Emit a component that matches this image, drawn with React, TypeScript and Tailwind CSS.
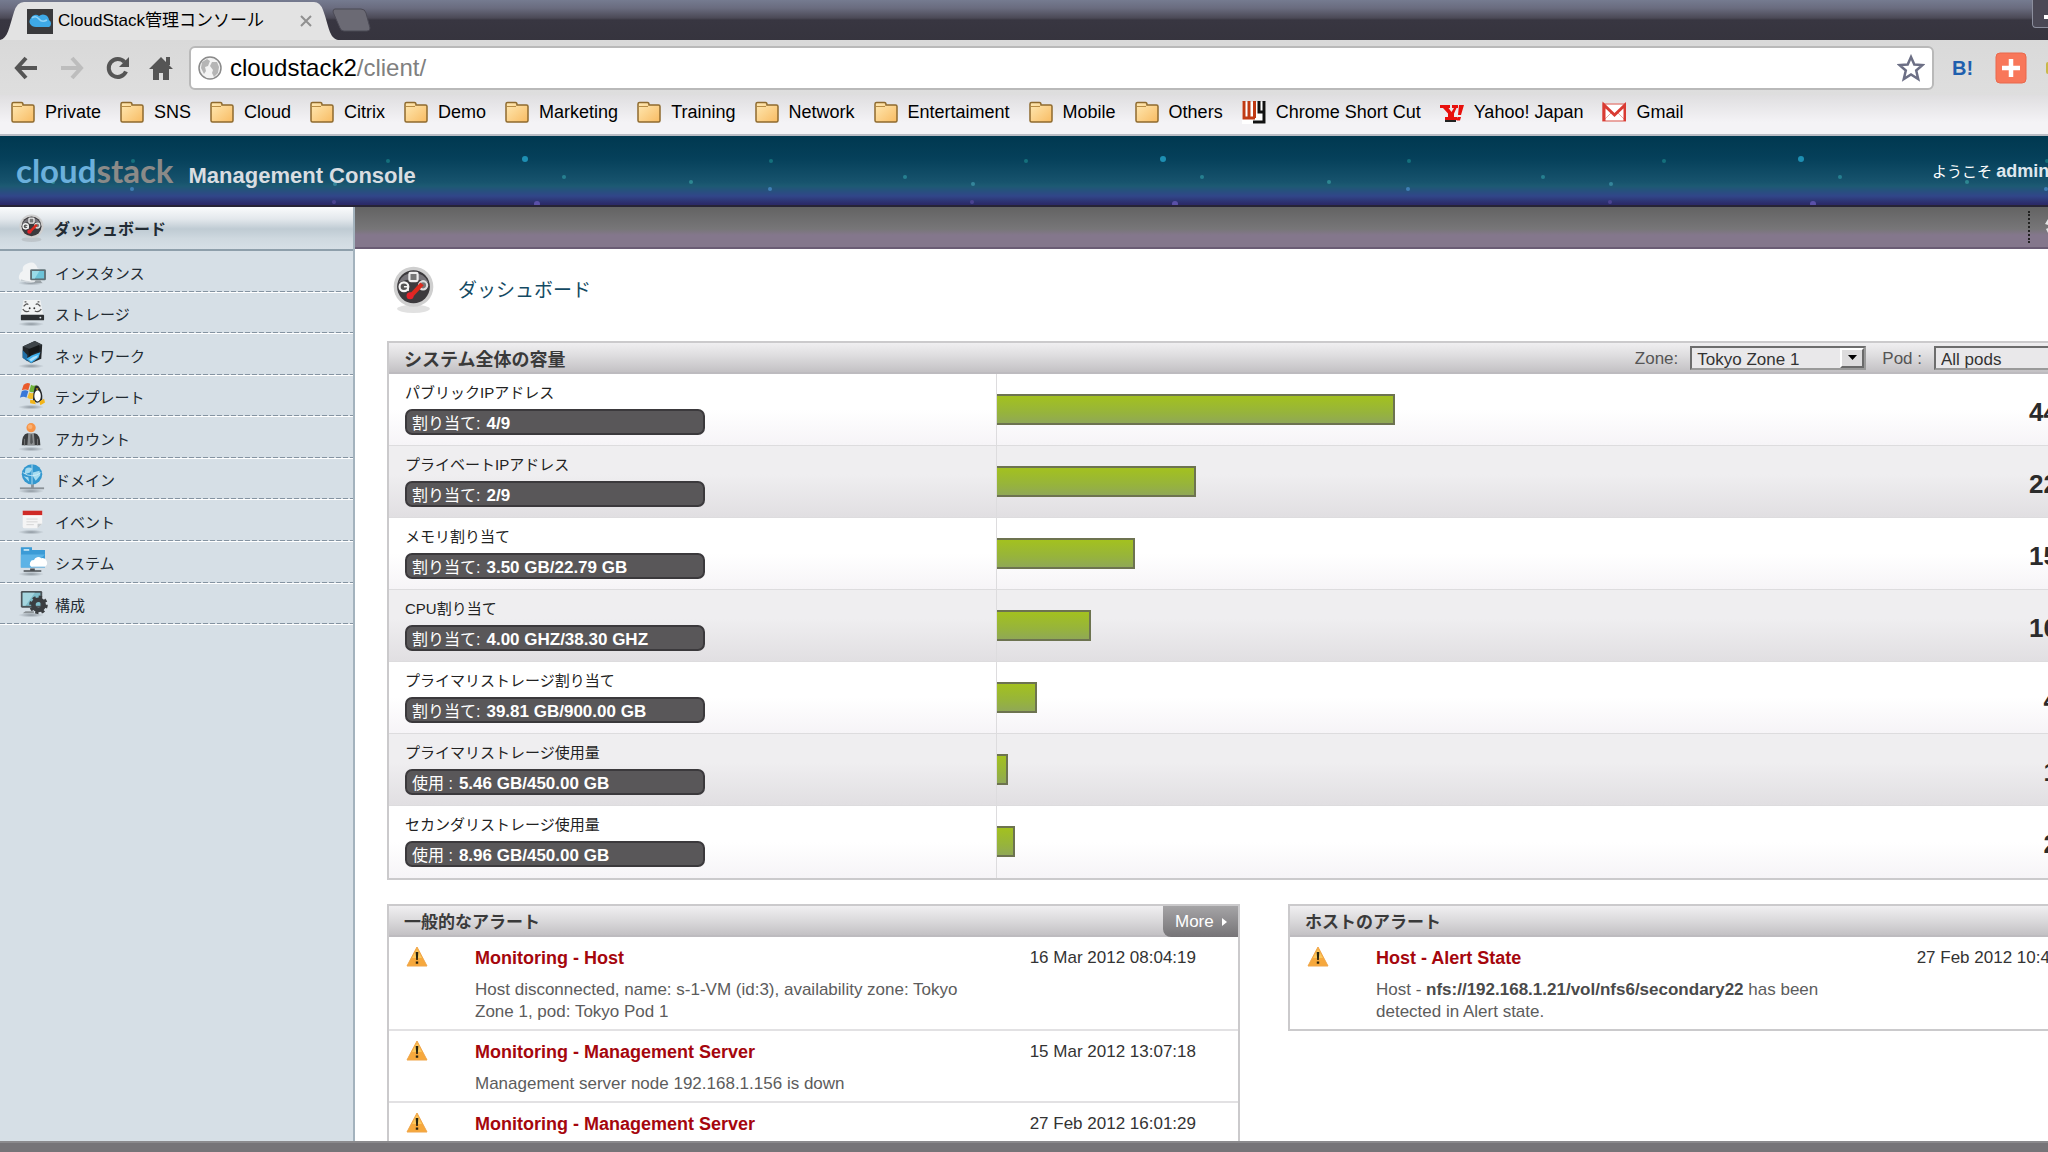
import type { ReactNode } from "react";

const UI = "font-['Liberation_Sans','Noto_Sans_CJK_JP',sans-serif]";

const NAV: { label: string; icon: ReactNode }[] = [
  { label: "インスタンス", icon: <InstanceIcon /> },
  { label: "ストレージ", icon: <StorageIcon /> },
  { label: "ネットワーク", icon: <NetworkIcon /> },
  { label: "テンプレート", icon: <TemplateIcon /> },
  { label: "アカウント", icon: <AccountIcon /> },
  { label: "ドメイン", icon: <DomainIcon /> },
  { label: "イベント", icon: <EventIcon /> },
  { label: "システム", icon: <SystemIcon /> },
  { label: "構成", icon: <ConfigIcon /> },
];

const FOLDERS = [
  "Private",
  "SNS",
  "Cloud",
  "Citrix",
  "Demo",
  "Marketing",
  "Training",
  "Network",
  "Entertaiment",
  "Mobile",
  "Others",
];

const CAPACITY = [
  { name: "パブリックIPアドレス", kind: "割り当て:", used: "4/9", percent: 44.44 },
  { name: "プライベートIPアドレス", kind: "割り当て:", used: "2/9", percent: 22.22 },
  { name: "メモリ割り当て", kind: "割り当て:", used: "3.50 GB/22.79 GB", percent: 15.36 },
  { name: "CPU割り当て", kind: "割り当て:", used: "4.00 GHZ/38.30 GHZ", percent: 10.44 },
  { name: "プライマリストレージ割り当て", kind: "割り当て:", used: "39.81 GB/900.00 GB", percent: 4.42 },
  { name: "プライマリストレージ使用量", kind: "使用 :", used: "5.46 GB/450.00 GB", percent: 1.21 },
  { name: "セカンダリストレージ使用量", kind: "使用 :", used: "8.96 GB/450.00 GB", percent: 1.99 },
];

const GENERAL_ALERTS = [
  {
    title: "Monitoring - Host",
    date: "16 Mar 2012 08:04:19",
    body: "Host disconnected, name: s-1-VM (id:3), availability zone: Tokyo Zone 1, pod: Tokyo Pod 1",
  },
  {
    title: "Monitoring - Management Server",
    date: "15 Mar 2012 13:07:18",
    body: "Management server node 192.168.1.156 is down",
  },
  {
    title: "Monitoring - Management Server",
    date: "27 Feb 2012 16:01:29",
    body: "Management server node 192.168.1.156 is down",
  },
];

/* ---------- sidebar icons ---------- */

function GaugeIcon({ className }: { className: string }) {
  return (
    <svg className={className} viewBox="0 0 30 34" preserveAspectRatio="none" aria-hidden="true">
      <ellipse cx="15" cy="31" rx="12" ry="3" fill="#888" opacity="0.25" />
      <circle cx="15" cy="15" r="14.500" fill="#cfcfcf" />
      <circle cx="15" cy="15" r="12" fill="#3c3a3d" />
      <path d="M4 12a12 12 0 0 1 22 0q-11-5-22 0z" fill="#77757a" />
      <rect x="12" y="5" width="6" height="6" rx="1" fill="#777" stroke="#eee" strokeWidth="1.600" />
      <circle cx="8" cy="15" r="3.200" fill="#555" stroke="#f4f4f4" strokeWidth="1.600" />
      <path d="M8 15h3v3" fill="none" stroke="#f4f4f4" strokeWidth="1.200" />
      <circle cx="22" cy="14" r="3" fill="#777" stroke="#ddd" strokeWidth="1.600" />
      <path d="M20 12l2.500 2-9 9.500-2.500-2z" fill="#dc2a1e" />
      <circle cx="12.500" cy="21.500" r="2.600" fill="#e4232b" />
    </svg>
  );
}

function NavSvg({ children }: { children: ReactNode }) {
  return (
    <svg className="h-[30px] w-[26px] shrink-0 overflow-visible" viewBox="0 0 28 32" aria-hidden="true">
      <defs>
        <radialGradient id="ground">
          <stop offset="0" stopColor="#6f7982" stopOpacity="0.7" />
          <stop offset="1" stopColor="#6f7982" stopOpacity="0" />
        </radialGradient>
      </defs>
      <ellipse cx="13" cy="29" rx="14" ry="2.500" fill="url(#ground)" />
      {children}
    </svg>
  );
}

function InstanceIcon() {
  return (
    <NavSvg>
      <path d="M3 27q-4-2-3-6t4-5q-1-6 5-8 8-4 11 5 5 1 5 7v6q-10 4-22 1z" fill="#f1f3f4" />
      <path d="M2 25q10 4 22 0-8 4-22 2z" fill="#c6ced3" />
      <rect x="12" y="14" width="17" height="12" rx="1.500" fill="#5f7076" />
      <rect x="14" y="16" width="13" height="8" fill="#6cc3d8" />
      <path d="M14 16h8l-5 8h-3z" fill="#9adbe8" />
      <path d="M18 26h5l2 3h-9z" fill="#9aa2a7" />
    </NavSvg>
  );
}

function StorageIcon() {
  return (
    <NavSvg>
      <path d="M5 3h18l3 16H2z" fill="#f1f3f4" />
      <path d="M5 10q3-4 5-2M23 10q-3-4-5-2M4 13q3 4 7 2M24 13q-3 4-7 2M6 5h2M20 5h2" fill="none" stroke="#555" strokeWidth="1.300" />
      <circle cx="11.500" cy="12" r="1" fill="#333" />
      <circle cx="16.500" cy="12" r="1" fill="#333" />
      <rect x="2" y="19" width="25" height="6" rx="1" fill="#2d3033" />
      <circle cx="23" cy="22" r="1" fill="#dfe6ea" />
    </NavSvg>
  );
}

function NetworkIcon() {
  return (
    <NavSvg>
      <path d="M4 8l13-6 8 4-1 15-11 5L4 20z" fill="#222629" />
      <path d="M4 8l13-6 8 4-12 5z" fill="#3e454a" />
      <path d="M4 12l5 5v7l-5-4z" fill="#1f6ea6" />
      <path d="M8 21q5-4 15-7l-2 6-8 6z" fill="#3fb0ee" />
      <path d="M11 22q4-4 10-5l-2 3-6 4z" fill="#a9defa" />
      <path d="M10 11l12-5v7q-6 1-11 6z" fill="#15181a" />
    </NavSvg>
  );
}

function TemplateIcon() {
  return (
    <NavSvg>
      <path d="M5 5q4-3 7-1l-2 7q-3-2-7 0z" fill="#ea5b2c" />
      <path d="M13 5q3 2 6 0l-2 7q-3 2-6 0z" fill="#6fb33a" />
      <path d="M3 12q4-2 7 0l-2 7q-3-2-7 0z" fill="#3a78d8" />
      <path d="M11 13q3 2 6 0l-2 7q-3 1-6-1z" fill="#f2bd2c" />
      <path d="M17 7q3-3 5 1 4 6 3 13-5 6-10 1 0-8 2-15z" fill="#25282a" />
      <ellipse cx="20" cy="17" rx="3.500" ry="6" fill="#fff" />
      <path d="M18 9h3l-1.500 2zM12 21l5 1 1 4-6-1zM22 23l5-3 1 4-5 3z" fill="#f2b418" />
    </NavSvg>
  );
}

function AccountIcon() {
  return (
    <NavSvg>
      <circle cx="13" cy="6" r="5" fill="#f79447" />
      <circle cx="12" cy="5" r="2.500" fill="#fbb173" />
      <path d="M3 25q0-12 6-13l4 1 4-1q6 1 6 13z" fill="#3b3d3f" />
      <path d="M10 12h6l1 13H9z" fill="#8d9092" />
      <path d="M12.500 13h1.500l1 9-2 2-1-2z" fill="#55585a" />
      <path d="M6 18v7M20 18v7" stroke="#77797b" />
    </NavSvg>
  );
}

function DomainIcon() {
  return (
    <NavSvg>
      <rect x="1" y="25" width="26" height="2" fill="#8a9298" />
      <rect x="13" y="21" width="3" height="5" fill="#8a9298" />
      <circle cx="14" cy="11" r="11" fill="#3498cf" />
      <path d="M7 5q4-3 7 0l-2 4-6 2zM15 9l7-2 1 5-5 6-3-5zM5 13l5 1 1 5z" fill="#a6dcf0" />
      <path d="M4 9q10 7 20 0M14 0v22" fill="none" stroke="#d8f2fb" strokeWidth="0.800" />
    </NavSvg>
  );
}

function EventIcon() {
  return (
    <NavSvg>
      <path d="M4 7h21v13l-5 5H6q-2 0-2-2z" fill="#f5f5f5" />
      <path d="M4 6h21v5H4z" fill="#cf2a26" />
      <path d="M4 11h21v1H4z" fill="#fff" />
      <path d="M8 15h12M8 18h12M8 21h8" stroke="#d4d4d4" strokeWidth="1" />
      <path d="M20 25v-5h5z" fill="#c9cdd0" />
    </NavSvg>
  );
}

function SystemIcon() {
  return (
    <NavSvg>
      <path d="M2 0h12v3h14v19H2z" fill="#3b9bd6" />
      <path d="M2 8h26l-14 14H2z" fill="#5cb3e6" />
      <path d="M5 2h6v2H5z" fill="#bfe2f5" />
      <path d="M13 21a4 4 0 0 1 3-7 5 5 0 0 1 8-2 5 5 0 0 1 4 9z" fill="#fff" />
      <path d="M12 23h5v2h7v1.500H5V25h7z" fill="#4a4f53" />
    </NavSvg>
  );
}

function ConfigIcon() {
  return (
    <NavSvg>
      <rect x="2" y="3" width="23" height="18" rx="1.500" fill="#4b5357" />
      <rect x="4" y="5" width="19" height="14" fill="#7fbecb" />
      <path d="M4 5h13L7 19H4z" fill="#a5d6df" />
      <path d="M7 25h9v2H4z" fill="#8b9296" />
      <circle cx="21" cy="18" r="5.500" fill="none" stroke="#3b3e41" strokeWidth="5" />
      <circle cx="21" cy="18" r="8.500" fill="none" stroke="#3b3e41" strokeWidth="3" strokeDasharray="3.400 3.270" />
    </NavSvg>
  );
}

/* ---------- browser icons ---------- */

function FolderIcon() {
  return (
    <svg className="h-6 w-6 shrink-0" viewBox="0 0 24 24" aria-hidden="true">
      <defs>
        <linearGradient id="folder" x1="0" y1="0" x2="1" y2="1">
          <stop offset="0" stopColor="#ffeab5" />
          <stop offset="1" stopColor="#f8bb62" />
        </linearGradient>
      </defs>
      <path d="M1 4q0-1.500 1.500-1.500h8Q12 2.500 12 5h9.500Q23 5 23 6.500v14q0 1.500-1.500 1.500h-19Q1 22 1 20.500z" fill="url(#folder)" stroke="#8e6a2e" strokeWidth="1.500" />
      <path d="M2 6.500h9" stroke="#b98d45" strokeWidth="1" />
    </svg>
  );
}

function GlobeIcon() {
  return (
    <svg className="size-6 shrink-0" viewBox="0 0 24 24" aria-hidden="true">
      <circle cx="12" cy="12" r="11" fill="#f3f3f3" stroke="#8a8a8a" strokeWidth="1.500" />
      <path d="M4 6l5-3 3 2-2 5-3 1 1 4-2 3-3-6zM14 6l5 0 2 5-1 6-4 4-2-4 1-3-3-4z" fill="#b5b5b5" />
    </svg>
  );
}

function BrowserTabs() {
  return (
    <div className="relative flex h-10 items-end bg-[linear-gradient(#757b90_0,#6a6c7f_8px,#4b4956_18px,#383641_20px,#36343e_100%)]">
      <div className="relative flex h-[38px] w-[340px] items-center">
        <svg className="absolute inset-0 h-full w-full" viewBox="0 0 340 38" preserveAspectRatio="none" aria-hidden="true">
          <path d="M0 38C8 36 9 26 14 10Q17 0 24 0H314Q320 0 323 8C329 24 329 36 338 38z" fill="#e3e3e3" />
        </svg>
        <div className="relative flex w-full items-center pr-7 pl-[27px]">
          <svg className="h-[25px] w-[26px]" viewBox="0 0 26 25" aria-hidden="true">
            <rect width="26" height="25" fill="#3a3a3c" />
            <path d="M5 17a5 5 0 0 1-1-8 5 5 0 0 1 8-2 6 6 0 0 1 10 4 4 4 0 0 1 0 7H9q-2 0-4-1z" fill="#3ea9e6" />
            <path d="M5 9q4-3 7 1t8 1" fill="none" stroke="#8fd3f7" strokeWidth="1.500" />
          </svg>
          <span className="ml-[5px] text-[17px] leading-6 whitespace-nowrap text-black">CloudStack管理コンソール</span>
          <button type="button" aria-label="Close tab" className="ml-auto size-3">
            <svg viewBox="0 0 12 12" className="size-3">
              <path d="M1 1l10 10M11 1L1 11" stroke="#909090" strokeWidth="2" />
            </svg>
          </button>
        </div>
      </div>
      <button type="button" aria-label="New tab" className="mb-2 -ml-2 h-6 w-[40px]">
        <svg viewBox="0 0 40 24" className="h-6 w-10">
          <path d="M3 1h26q4 0 5 4l4 15q0 3-3 3H12q-3 0-4-3L1 4q0-3 2-3z" fill="#6b6a74" stroke="#4b4a55" />
        </svg>
      </button>
      <button type="button" aria-label="Minimize" className="absolute top-0 right-0 flex h-7 w-4 items-end justify-end rounded-bl border-b border-l border-[#8c8f9e] bg-[#4b4956] pb-2">
        <span className="h-1 w-1 bg-white" />
      </button>
    </div>
  );
}

function BrowserToolbar() {
  return (
    <div className="flex h-[55px] items-center bg-[linear-gradient(#d9d9d9,#dedede)] pl-[14px]">
      <button type="button" aria-label="Back" className="mr-[22px]">
        <svg viewBox="0 0 24 24" className="size-6">
          <path d="M12 2L3 12l9 10M3 12h20" fill="none" stroke="#555" strokeWidth="4" />
        </svg>
      </button>
      <button type="button" aria-label="Forward" className="mr-[22px]">
        <svg viewBox="0 0 24 24" className="size-6">
          <path d="M12 2l9 10-9 10M21 12H1" fill="none" stroke="#bdbdbd" strokeWidth="4" />
        </svg>
      </button>
      <button type="button" aria-label="Reload" className="mr-[18px]">
        <svg viewBox="0 0 24 24" className="size-6">
          <path d="M18.500 6A9 9 0 1 0 20 15.500" fill="none" stroke="#555" strokeWidth="4" />
          <path d="M23 1v10H13z" fill="#555" />
        </svg>
      </button>
      <button type="button" aria-label="Home" className="mr-[15px]">
        <svg viewBox="0 0 26 26" className="size-[26px]">
          <path d="M13 2l12 12h-4v11h-6v-7h-4v7H5V14H1z" fill="#555" />
          <path d="M18 2h4v8h-4z" fill="#555" />
        </svg>
      </button>
      <div className="flex h-[44px] min-w-0 flex-1 items-center rounded-md border-2 border-[#b9b9b9] bg-white px-[7px]">
        <GlobeIcon />
        <div className="relative ml-2 h-8 min-w-0 flex-1 text-[24px] leading-8">
          <input
            aria-label="Address"
            defaultValue="cloudstack2/client/"
            className="h-8 w-full bg-transparent text-transparent outline-none"
          />
          <span className="pointer-events-none absolute inset-0 text-black" aria-hidden="true">
            cloudstack2<span className="text-[#808080]">/client/</span>
          </span>
        </div>
        <button type="button" aria-label="Bookmark this page">
          <svg viewBox="0 0 28 28" className="size-7">
            <path d="M14 3l3.300 7.500 8 .6-6.100 5.400 2 8.500-7.200-4.600L6.800 25l2-8.500L2.700 11.100l8-.6z" fill="#fff" stroke="#6c6f85" strokeWidth="2.500" />
          </svg>
        </button>
      </div>
      <button type="button" className="ml-[18px] w-6 text-left text-xl leading-6 font-bold text-[#1f5fae]">B!</button>
      <button type="button" aria-label="Add" className="mr-[19px] ml-[19px]">
        <svg viewBox="0 0 32 32" className="size-8">
          <rect x="1" y="1" width="30" height="30" rx="4" fill="#f8775a" stroke="#e9694c" />
          <path d="M16 7v18M7 16h18" stroke="#fff" strokeWidth="4.500" />
        </svg>
      </button>
      <span className="h-3 w-0.5 rounded-l-full bg-[#c9b84a]" />
    </div>
  );
}

function Bookmark({ icon, label }: { icon: ReactNode; label: string }) {
  return (
    <a href="#" className="flex shrink-0 items-center gap-[10px]">
      {icon}
      {label}
    </a>
  );
}

function BookmarksBar() {
  return (
    <nav className="flex h-[41px] items-start gap-[19px] border-b-2 border-[#b9bcc4] bg-[linear-gradient(#dfdee0,#f4f3f6_70%)] pt-[5px] pl-[11px] text-[18px] leading-6 whitespace-nowrap text-black">
      {FOLDERS.map((f) => (
        <Bookmark key={f} icon={<FolderIcon />} label={f} />
      ))}
      <Bookmark
        label="Chrome Short Cut"
        icon={
          <svg className="size-6 shrink-0" viewBox="0 0 24 24" aria-hidden="true">
            <rect y="2" width="24" height="22" fill="#fff" />
            <path d="M2 1v17h11M7 1v16M12.500 1v17" fill="none" stroke="#c03a14" strokeWidth="3" />
            <path d="M17 1v11h5M22 1v21H11" fill="none" stroke="#111" strokeWidth="3" />
          </svg>
        }
      />
      <Bookmark
        label="Yahoo! Japan"
        icon={
          <svg className="size-6 shrink-0" viewBox="0 0 24 24" aria-hidden="true">
            <path d="M0 5h10v3H8.500l3 4 2.500-4h-2V5h6v3h-1.500L14 13.500V17h3v3H5v-3h3v-3.500L3 8H0z" fill="#e8100c" />
            <path d="M19 5h5l-3 10h-3zM17.500 17h3.500l-1 3.500h-3.500z" fill="#e8100c" />
            <path d="M5 20h11v2H5z" fill="#222" />
          </svg>
        }
      />
      <Bookmark
        label="Gmail"
        icon={
          <svg className="size-6 shrink-0" viewBox="0 0 24 24" aria-hidden="true">
            <rect x="1" y="4" width="23" height="17" fill="#fff" stroke="#e58a85" strokeWidth="1.500" />
            <path d="M1 21l9-9M24 21l-9-9" stroke="#eba7a3" />
            <path d="M2 21V5l10.500 10L23 5v16" fill="none" stroke="#d93b33" strokeWidth="3" />
          </svg>
        }
      />
    </nav>
  );
}

/* ---------- console ---------- */

const STARS: [number, number, number, string][] = [
  [3, 23, 3, "#1d8fb3"],
  [42, 41, 2, "#257f90"],
  [15, 68, 3, "#5a50a8"],
  [169, 46, 2, "#2d8791"],
  [249, 25, 2, "#14707c"],
  [248, 53, 2, "#3f7fb5"],
  [383, 41, 2, "#257f90"],
  [451, 48, 2, "#34859b"],
  [450, 66, 2, "#4a4390"],
  [504, 25, 2, "#14707c"],
];

function ConsoleHeader() {
  return (
    <header className="relative flex h-[71px] shrink-0 items-center border-b-2 border-[#262336] bg-[linear-gradient(#003850_0,#05405a_22px,#17536d_46px,#1d5a73_50px,#314689_60px,#2b2a68_68px)]">
      <svg className="absolute inset-0 h-full w-full" aria-hidden="true">
        <pattern id="stars" x="-116" width="638" height="71" patternUnits="userSpaceOnUse">
          {STARS.map(([x, y, r, c]) => (
            <circle key={`${x}-${y}`} cx={x} cy={y} r={r} fill={c} />
          ))}
        </pattern>
        <rect width="100%" height="100%" fill="url(#stars)" />
      </svg>
      <div className="relative flex w-full items-baseline pt-[5px] pl-4">
        <span className="font-['Lato',sans-serif] text-[33px] leading-9 font-bold text-[#6bb0dc]">
          cloud<span className="text-[#8b8a88]">stack</span>
        </span>
        <h1 className="ml-[15px] text-[22px] leading-9 font-bold text-[#d9dde1]">Management Console</h1>
      </div>
      <div className="relative w-[116px] shrink-0 pt-0.5 text-[15px] leading-6 whitespace-nowrap text-white">
        ようこそ <b className="text-[18px] text-[#dfe7ee]">admin</b>
      </div>
    </header>
  );
}

function Sidebar() {
  return (
    <nav className="w-[355px] shrink-0 border-r-2 border-[#a3b2bd] bg-[#d6dfe6] text-[15px] text-[#222b33]">
      <a
        href="#"
        className="flex h-[44px] items-center gap-[10px] border-b-2 border-[#8e9fab] bg-[linear-gradient(#fafbfc_0,#e3e8ec_12px,#bfcbd3_22px,#cfd9e0_32px,#d6dfe6)] pl-[19px] text-[16px] font-bold"
      >
        <GaugeIcon className="h-7 w-[25px]" />
        <span className="pt-1">ダッシュボード</span>
      </a>
      <ul className="flex h-[374px] flex-col">
        {NAV.map((item) => (
          <li key={item.label} className="flex flex-1 flex-col">
            <a href="#" className="flex flex-1 items-center gap-[10px] pl-[19px]">
              {item.icon}
              <span className="pt-1.5">{item.label}</span>
            </a>
            <span className="h-[2px] border-b border-white bg-[repeating-linear-gradient(90deg,#8493a1_0_5px,transparent_5px_7px)]" />
          </li>
        ))}
      </ul>
    </nav>
  );
}

function PanelTitle({ children }: { children: ReactNode }) {
  return (
    <div className="flex h-[31px] items-center justify-between border-b-2 border-[#bdbbbf] bg-[linear-gradient(#f0eff1,#dddcde_45%,#c3c1c4)] pl-[15px] text-[#3a3a3a]">
      {children}
    </div>
  );
}

function ClassicSelect({ id, options }: { id: string; options: string[] }) {
  return (
    <div className="relative h-6 w-[176px]">
      <select
        id={id}
        className="h-6 w-full appearance-none border-2 border-t-[#6d6d6d] border-r-[#9a9a9a] border-b-[#9a9a9a] border-l-[#6d6d6d] bg-[#e9e8ea] pt-0.5 pl-[5px] text-[17px] leading-5 text-[#333] outline-none"
      >
        {options.map((o) => (
          <option key={o}>{o}</option>
        ))}
      </select>
      <span className="pointer-events-none absolute top-0.5 right-0.5 flex h-5 w-6 items-center justify-center border-2 border-t-white border-r-[#6a6a6a] border-b-[#6a6a6a] border-l-white bg-[#dddcdd]">
        <svg viewBox="0 0 9 5" className="h-[5px] w-[9px]">
          <path d="M0 0h9L4.500 5z" fill="#000" />
        </svg>
      </span>
    </div>
  );
}

function CapacityPanel() {
  return (
    <section className="border-2 border-[#cbcacc]">
      <PanelTitle>
        <h3 className="pt-1 text-[18px] leading-6 font-bold">システム全体の容量</h3>
        <div className="flex items-center pr-[15px] text-[17px] leading-6 text-[#555]">
          <label htmlFor="zone" className="mr-3 pt-0.5">
            Zone:
          </label>
          <ClassicSelect id="zone" options={["Tokyo Zone 1"]} />
          <label htmlFor="pod" className="mr-3 ml-4 pt-0.5">
            Pod :
          </label>
          <ClassicSelect id="pod" options={["All pods"]} />
        </div>
      </PanelTitle>
      <ul>
        {CAPACITY.map((c) => (
          <li
            key={c.name}
            className="flex h-[72px] border-b border-[#dddcde] bg-[linear-gradient(#fff_50%,#f6f4f7)] last:border-b-0 even:bg-[linear-gradient(#efeef0_40%,#e1dfe2)]"
          >
            <div className="w-[608px] shrink-0 border-r border-[#dddcde] pt-[7px] pl-4">
              <div className="text-[15px] leading-6 text-[#222]">{c.name}</div>
              <div className="mt-1 flex h-[26px] w-[300px] items-center gap-1.5 rounded-[7px] border-2 border-[#3b393c] bg-[#595759] pt-[3px] pl-[5px] text-[16px] leading-6 whitespace-nowrap text-white">
                {c.kind}
                <b className="text-[17px]">{c.used}</b>
              </div>
            </div>
            <div className="w-[896px] shrink-0 pt-5">
              <div
                className="h-[31px] border-2 border-l-0 border-[#6d7350] bg-[linear-gradient(#a3c11f,#97b43b_60%,#90a856)]"
                style={{ width: `${c.percent}%` }}
              />
            </div>
            <div className="flex-1 pt-5 pr-11 text-right text-[26px] leading-9 font-bold text-[#2b2b2b]">
              {Math.round(c.percent)}%
            </div>
          </li>
        ))}
      </ul>
    </section>
  );
}

function AlertRow({ title, date, children }: { title: string; date: string; children: ReactNode }) {
  return (
    <li className="flex items-start border-b-2 border-[#e2e1e3] pt-[9px] pr-[42px] pb-1.5 pl-4 last:border-b-0">
      <svg className="h-6 w-6 shrink-0" viewBox="0 0 24 24" aria-hidden="true">
        <path d="M12 1l10 19H2z" fill="#f6a83c" stroke="#f0a64a" strokeLinejoin="round" />
        <path d="M12 3l5 9H7z" fill="#fbc75c" />
        <path d="M10.700 6h2.600l-.5 8h-1.600zM10.800 15.500h2.400v2.300h-2.400z" fill="#26210f" />
      </svg>
      <div className="ml-[46px] min-w-0 flex-1">
        <div className="flex items-center justify-between">
          <h4 className="text-[18px] leading-6 font-bold text-[#a5060d]">{title}</h4>
          <time className="text-[17px] leading-6 text-[#333]">{date}</time>
        </div>
        <p className="mt-[9px] w-[490px] text-[17px] leading-[22px] text-[#5c5c5c]">{children}</p>
      </div>
    </li>
  );
}

function Dashboard() {
  return (
    <main className="min-w-0 flex-1 overflow-hidden">
      <div className="flex h-[42px] items-center justify-end border-b-2 border-[#6a5c74] bg-[linear-gradient(#636363,#777678_55%,#84778c_70%)]">
        <span className="h-8 border-l-2 border-dotted border-[#222]" />
        <svg className="ml-[15px] h-5 w-[3px]" viewBox="0 0 3 20" aria-hidden="true">
          <path d="M3 2L0 7l3 1v3L1 12l2 4z" fill="#e4e4e4" />
        </svg>
      </div>
      <div className="w-[1772px] pl-8">
        <div className="flex h-[92px] items-start gap-6 pt-[17px] pl-1.5">
          <GaugeIcon className="h-[47px] w-[41px]" />
          <h2 className="pt-[11px] text-[19px] leading-7 text-[#134a63]">ダッシュボード</h2>
        </div>
        <CapacityPanel />
        <div className="mt-6 flex items-start">
          <section className="w-[853px] shrink-0 border-2 border-[#cbcacc]">
            <PanelTitle>
              <h3 className="pt-1 text-[17px] leading-6 font-bold">一般的なアラート</h3>
              <button
                type="button"
                className="flex h-[31px] w-[75px] items-center gap-2 self-start rounded-bl-lg bg-[linear-gradient(#a5a4a6,#767477)] pl-3 text-[17px] text-white"
              >
                More
                <svg viewBox="0 0 5 8" className="h-2 w-[5px]" aria-hidden="true">
                  <path d="M0 0l5 4-5 4z" fill="#fff" />
                </svg>
              </button>
            </PanelTitle>
            <ul>
              {GENERAL_ALERTS.map((a) => (
                <AlertRow key={a.date} title={a.title} date={a.date}>
                  {a.body}
                </AlertRow>
              ))}
            </ul>
          </section>
          <section className="ml-[48px] flex-1 border-2 border-[#cbcacc]">
            <PanelTitle>
              <h3 className="pt-1 text-[17px] leading-6 font-bold">ホストのアラート</h3>
            </PanelTitle>
            <ul>
              <AlertRow title="Host - Alert State" date="27 Feb 2012 10:45:12">
                Host - <b className="text-[#4a4a4a]">nfs://192.168.1.21/vol/nfs6/secondary22</b> has been detected in Alert
                state.
              </AlertRow>
            </ul>
          </section>
        </div>
      </div>
    </main>
  );
}

export default function App() {
  return (
    <div className={`${UI} flex h-screen flex-col overflow-hidden bg-white`}>
      <div className="shrink-0">
        <BrowserTabs />
        <BrowserToolbar />
        <BookmarksBar />
      </div>
      <ConsoleHeader />
      <div className="flex min-h-0 flex-1">
        <Sidebar />
        <Dashboard />
      </div>
      <div className="h-[11px] shrink-0 border-t-2 border-[#8b8a8d] bg-[#767478]" />
    </div>
  );
}
